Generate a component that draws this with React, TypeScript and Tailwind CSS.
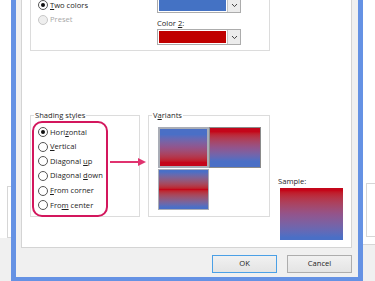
import type { ReactNode } from "react";
import clsx from "clsx";

function Radio({
  checked,
  disabled,
  children,
}: {
  checked?: boolean;
  disabled?: boolean;
  children: ReactNode;
}) {
  return (
    <div className="flex h-[14.6px] items-center">
      <span
        className={clsx(
          "flex h-[10px] w-[10px] items-center justify-center rounded-full border",
          disabled ? "border-[#c8c8c8] bg-[#efefef]" : "border-[#555] bg-white",
        )}
      >
        {checked && <span className="h-[4px] w-[4px] rounded-full bg-[#111]" />}
      </span>
      <span className={clsx("ml-[2px]", disabled ? "text-[#a8a8a8]" : "text-[#1e1e1e]")}>
        {children}
      </span>
    </div>
  );
}

function ColorCombo({ swatch }: { swatch: string }) {
  return (
    <div className="flex h-[16px] w-[84px] border border-[#acacac] bg-white">
      <div className={clsx("m-[1px] flex-1", swatch)} />
      <div className="flex w-[13px] items-center justify-center border-l border-[#c4c4c4] bg-[#ececec]">
        <svg width="7" height="5" viewBox="0 0 7 5">
          <polyline points="1,1 3.5,3.6 6,1" fill="none" stroke="#444" strokeWidth="1" />
        </svg>
      </div>
    </div>
  );
}

export default function App() {
  return (
    <div className="relative flex h-[281px] w-[375px] overflow-hidden bg-white font-['Segoe_UI','Open_Sans',sans-serif] text-[7.6px] text-[#1e1e1e]">
      {/* window behind, left */}
      <div className="flex w-[11px] flex-col bg-white">
        <div className="h-[186px] shrink-0" />
        <div className="ml-[7px] h-[52px] shrink-0 border-y border-l border-[#d6d6d6]" />
        <div className="flex-1 bg-[#f0f0f0]" />
      </div>

      {/* dialog */}
      <div className="flex h-[281px] w-[352px] shrink-0 flex-col border-x-[5px] border-b-[4px] border-[#6592e4] bg-[#f0f0f0] pl-[5px]">
        <div className="flex h-[248px] w-[331px] shrink-0 flex-col border-x border-b border-[#d4d4d4] bg-white">
          {/* colors group, top cut off */}
          <div className="ml-[8px] flex h-[51px] w-[240px] shrink-0 border-x border-b border-[#dcdcdc]">
            <div className="-mt-[2px] w-[126px] pl-[7px]">
              <Radio checked>
                <span className="underline">T</span>wo colors
              </Radio>
              <Radio disabled>Preset</Radio>
            </div>
            <div className="-mt-[3px]">
              <ColorCombo swatch="bg-[#4472c4]" />
              <div className="flex h-[16px] items-center pt-[5px]">
                Color&nbsp;<span className="underline">2</span>:
              </div>
              <ColorCombo swatch="bg-[#c00000]" />
            </div>
          </div>

          <div className="mt-[59px] flex items-start">
            <fieldset className="ml-[8px] h-[107px] w-[110px] border border-[#dcdcdc]">
              <legend className="ml-[3px] px-[1px] leading-[10px]">Shading styles</legend>
              <div className="pl-[7px] pt-[5px]">
                <Radio checked>
                  Hori<span className="underline">z</span>ontal
                </Radio>
                <Radio>
                  <span className="underline">V</span>ertical
                </Radio>
                <Radio>
                  Diagonal <span className="underline">u</span>p
                </Radio>
                <Radio>
                  Diagonal <span className="underline">d</span>own
                </Radio>
                <Radio>
                  <span className="underline">F</span>rom corner
                </Radio>
                <Radio>
                  Fro<span className="underline">m</span> center
                </Radio>
              </div>
            </fieldset>

            <fieldset className="ml-[8px] h-[107px] w-[122px] border border-[#dcdcdc]">
              <legend className="ml-[3px] px-[1px] leading-[10px]">
                V<span className="underline">a</span>riants
              </legend>
              <div className="grid grid-cols-[51px_52px] grid-rows-[41px_41px] gap-y-[1px] pl-[9px] pt-[7px]">
                <div className="border-2 border-[#a9adb6] bg-linear-to-b from-[#4a6fc6] from-15% via-[#93548b] to-[#c4061a] to-90%" />
                <div className="border border-[#8a8a8a] bg-linear-to-b from-[#c4061a] from-10% via-[#93548b] to-[#4a6fc6] to-85%" />
                <div className="border border-[#a9adb6] bg-linear-to-b from-[#4a6fc6] from-5% via-[#c4061a] via-50% to-[#4a6fc6] to-95%" />
              </div>
            </fieldset>

            <div className="ml-[8px] mt-[66px] flex flex-col">
              <div className="leading-[10px]">Sample:</div>
              <div className="ml-[2px] mt-[2px] h-[52px] w-[63px] bg-linear-to-b from-[#c4061a] from-5% via-[#93548b] to-[#4a6fc6] to-95%" />
            </div>
          </div>
        </div>

        <div className="flex flex-1 items-start justify-end gap-[10px] pr-[6px] pt-[7px]">
          <button className="h-[18px] w-[65px] border border-[#4ba0e6] bg-linear-to-b from-[#f1f1f1] to-[#e4e4e4] text-[#222]">
            OK
          </button>
          <button className="h-[18px] w-[65px] border border-[#adadad] bg-linear-to-b from-[#f1f1f1] to-[#e4e4e4] text-[#222]">
            Cancel
          </button>
        </div>
      </div>

      {/* window behind, right */}
      <div className="flex w-[12px] flex-col bg-white">
        <div className="h-[183px] shrink-0" />
        <div className="ml-[3px] h-[54px] shrink-0 border-y border-l border-[#d6d6d6]" />
        <div className="mt-[7px] flex-1 border-t border-[#d6d6d6] bg-[#f0f0f0]" />
      </div>

      {/* annotation */}
      <div className="absolute left-[32px] top-[121px] h-[96px] w-[76px] rounded-[10px] border-2 border-[#d3175d]" />
      <svg className="absolute left-[108px] top-[156px]" width="40" height="12" viewBox="0 0 40 12">
        <line x1="2" y1="6" x2="31" y2="6" stroke="#e0336f" strokeWidth="2" />
        <polygon points="30,2 38,6 30,10" fill="#e0336f" />
      </svg>
    </div>
  );
}
